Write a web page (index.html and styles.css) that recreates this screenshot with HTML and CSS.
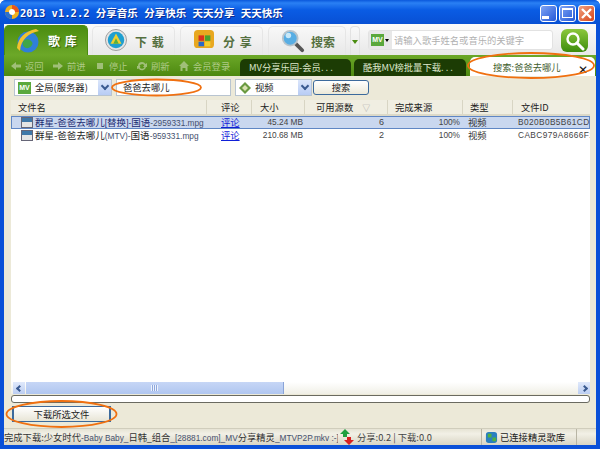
FILE: index.html
```html
<!DOCTYPE html>
<html lang="zh">
<head>
  <meta charset="UTF-8">
  <title>2013 v1.2.2</title>
  <link rel="stylesheet" href="styles.css">
</head>
<body>
  <div class="window">
    <div class="titlebar">
      <svg class="appIcon" width="16" height="16" viewBox="0 0 16 16">
        <circle cx="8" cy="8" r="7" fill="#f0b020"/>
        <circle cx="8" cy="8" r="3" fill="#fff"/>
        <path d="M8 1a7 7 0 0 1 7 7h-4a3 3 0 0 0-3-3z" fill="#e8541c"/>
        <path d="M1 8a7 7 0 0 0 7 7v-4a3 3 0 0 1-3-3z" fill="#2a6fd0"/>
      </svg>
      <span class="titleText">2013 v1.2.2 分享音乐 分享快乐 天天分享 天天快乐</span>
      <div class="winBtns">
        <span class="winBtn"><i class="minIcon"></i></span>
        <span class="winBtn"><i class="maxIcon"></i></span>
        <span class="winBtn closeBtn">
          <svg width="13" height="13" viewBox="0 0 13 13"><path d="M2 2l9 9M11 2l-9 9" stroke="#fff" stroke-width="2.4"/></svg>
        </span>
      </div>
    </div>

    <div class="client">
      <!-- Main tabs -->
      <div class="mainTabs">
        <div class="mainTab active">
          <svg width="24" height="26" viewBox="0 0 24 26">
            <ellipse cx="12" cy="14" rx="10.5" ry="10.5" fill="#2f7fd8"/>
            <path d="M7 13c4-3 7-2 9 1s-3 7-6 6-4-4-3-7z" fill="#3fa648"/>
            <path d="M1 20C2 10 9 3 20 1l3 2C13 5 5 11 4 23z" fill="#f2c230"/>
          </svg>
          <span class="tabLabel">歌 库</span>
        </div>
        <div class="mainTab t2">
          <svg width="22" height="22" viewBox="0 0 24 24">
            <circle cx="12" cy="12" r="11.5" fill="#e4e4e4" stroke="#999"/>
            <circle cx="12" cy="12" r="9" fill="#1f9fd0"/>
            <path d="M12 5l6 11H6z" fill="#f0d030"/>
            <path d="M12 10l3 6H9z" fill="#58b040"/>
          </svg>
          <span class="tabLabel">下 载</span>
        </div>
        <div class="mainTab t3">
          <svg width="22" height="20" viewBox="0 0 24 22">
            <rect x="1" y="1" width="22" height="20" rx="4" fill="#e8a820"/>
            <rect x="6" y="7" width="6" height="6" fill="#d83020"/>
            <rect x="13" y="7" width="6" height="6" fill="#48a030"/>
            <rect x="6" y="14" width="6" height="5" fill="#2868c8"/>
            <rect x="13" y="14" width="6" height="5" fill="#f0d030"/>
          </svg>
          <span class="tabLabel">分 享</span>
        </div>
        <div class="mainTab t4">
          <svg width="24" height="24" viewBox="0 0 26 26">
            <path d="M15 15l8 8" stroke="#555" stroke-width="4" stroke-linecap="round"/>
            <circle cx="10" cy="10" r="8" fill="#58aee4" stroke="#b8c4cc" stroke-width="2"/>
            <circle cx="8" cy="7" r="3" fill="#c8e8f8"/>
          </svg>
          <span class="tabLabel">搜索</span>
        </div>
        <div class="dropTab"><i class="greenCaret"></i></div>
        <div class="searchBox">
          <div class="mvPick"><span class="mvBadge small">MV</span><i class="blackCaret"></i></div>
          <div class="searchHint">请输入歌手姓名或音乐的关键字</div>
        </div>
        <div class="goBtn">
          <svg width="20" height="20" viewBox="0 0 20 20">
            <circle cx="8" cy="8" r="5.5" fill="none" stroke="#fff" stroke-width="2.4"/>
            <path d="M12 12l6 6" stroke="#fff" stroke-width="3" stroke-linecap="round"/>
          </svg>
        </div>
      </div>

      <!-- Green nav bar -->
      <div class="navBar">
        <div class="navLinks">
          <span class="navLink"><svg width="10" height="10" viewBox="0 0 10 10"><path d="M0 5l5-4v2.500h5v3H5V9z"/></svg>返回</span>
          <span class="navLink"><svg width="10" height="10" viewBox="0 0 10 10"><path d="M10 5L5 1v2.500H0v3h5V9z"/></svg>前进</span>
          <span class="navLink"><svg width="10" height="10" viewBox="0 0 10 10"><rect x="2" y="2" width="6" height="6"/></svg>停止</span>
          <span class="navLink"><svg width="10" height="10" viewBox="0 0 10 10"><path d="M5 1a4 4 0 0 1 3.500 2L10 2v4H6l1.200-1.400A2.500 2.500 0 0 0 2.500 5H1a4 4 0 0 1 4-4zM0 8V5h3.500L2.800 6.200A2.500 2.500 0 0 0 7.500 6H9a4 4 0 0 1-7.300 1.500z"/></svg>刷新</span>
          <span class="navLink wide"><svg width="10" height="10" viewBox="0 0 10 10"><path d="M5 0l5 5H8.500v5h-2V7h-3v3h-2V5H0z"/></svg>会员登录</span>
        </div>
        <div class="pageTab tabA">MV分享乐园-会员. . .</div>
        <div class="pageTab tabB">酷我MV榜批量下载. . .</div>
        <div class="pageTab current">搜索:爸爸去哪儿<b class="closeX">✕</b></div>
      </div>

      <!-- Search form -->
      <div class="formRow">
        <div class="field scope">
          <span class="mvBadge">MV</span>
          <span class="fieldText">全局(服务器)</span>
          <i class="comboBtn"><i class="chev"></i></i>
        </div>
        <div class="field keyword">爸爸去哪儿</div>
        <div class="field kind">
          <svg width="12" height="12" viewBox="0 0 12 12"><path d="M6 0l6 6-6 6-6-6z" fill="#6a9a40"/><path d="M6 3l3 3-3 3-3-3z" fill="#d8e0b0"/></svg>
          <span class="fieldText">视频</span>
          <i class="comboBtn"><i class="chev"></i></i>
        </div>
        <button class="searchBtn">搜索</button>
      </div>

      <!-- Results -->
      <div class="listBox">
        <div class="listRow listHead">
          <div class="cName">文件名</div>
          <div class="cNote">评论</div>
          <div class="cSize">大小</div>
          <div class="cSrc">可用源数<i class="sortMark">▽</i></div>
          <div class="cDone">完成来源</div>
          <div class="cType">类型</div>
          <div class="cId">文件ID</div>
        </div>
        <div class="listRow item selected">
          <div class="cName"><i class="fileIcon"></i><span class="nameText">群星-爸爸去哪儿<span class="lat">[</span>替换<span class="lat">]-</span>国语<span class="lat fade">-2959331.mpg</span></span></div>
          <div class="cNote"><a href="#">评论</a></div>
          <div class="cSize right">45.24 MB</div>
          <div class="cSrc right">6</div>
          <div class="cDone right">100%</div>
          <div class="cType">视频</div>
          <div class="cId">B020B0B5B61CDF6B</div>
        </div>
        <div class="listRow item">
          <div class="cName"><i class="fileIcon"></i><span class="nameText">群星-爸爸去哪儿<span class="lat fade">(MTV)-</span>国语<span class="lat fade">-959331.mpg</span></span></div>
          <div class="cNote"><a href="#">评论</a></div>
          <div class="cSize right">210.68 MB</div>
          <div class="cSrc right">2</div>
          <div class="cDone right">100%</div>
          <div class="cType">视频</div>
          <div class="cId">CABC979A8666F1C0</div>
        </div>
        <div class="listFill"></div>
        <div class="hScroll">
          <i class="scrollBtn"><i class="arrowL"></i></i>
          <div class="scrollThumb"><i class="grip"></i></div>
          <div class="scrollTrack"></div>
          <i class="scrollBtn"><i class="arrowR"></i></i>
        </div>
      </div>
      <div class="progress"></div>

      <div class="btnRow">
        <button class="downBtn">下载所选文件</button>
      </div>

      <!-- Status bar -->
      <div class="statusBar">
        <div class="stMsg">完成下载:少女时代<span class="lat fade">-Baby Baby_</span>日韩<span class="lat">_</span>组合<span class="lat fade">_[28881.com]_MV</span>分享精灵<span class="lat fade">_MTVP2P.mkv :-]</span></div>
        <div class="stRate">
          <svg width="14" height="16" viewBox="0 0 14 16">
            <path d="M5 0l5 5H7v3H3V5H0z" fill="#20a040"/>
            <path d="M9 16l5-5h-3V8H7v3H4z" fill="#d82020"/>
          </svg>
          <span>分享:0.2 | 下载:0.0</span>
        </div>
        <div class="stConn">
          <svg width="13" height="13" viewBox="0 0 14 14">
            <rect x="1" y="1" width="12" height="12" rx="3" fill="#2a7fc0"/>
            <path d="M3 3h4v4H3zM8 7h4v4H8z" fill="#50b040"/>
          </svg>
          <span>已连接精灵歌库</span>
        </div>
        <div class="stGrip"></div>
      </div>
    </div>
  </div>

  <!-- hand drawn marks on top of the screenshot -->
  <svg class="marks" width="600" height="449" viewBox="0 0 600 449">
    <g fill="none" stroke="#f07010" stroke-width="1.8">
      <ellipse cx="156.500" cy="87.500" rx="44.500" ry="8"/>
      <ellipse cx="531" cy="65.500" rx="63" ry="12.500"/>
      <ellipse cx="61.500" cy="414" rx="55" ry="13"/>
    </g>
  </svg>
</body>
</html>
```

FILE: styles.css
```css
* {
  box-sizing: border-box;
}
html, body {
  margin: 0;
  height: 449px;
  overflow: hidden;
}
body {
  position: relative;
  font-family: "Noto Sans CJK SC", "Liberation Sans", sans-serif;
  font-size: 9.3px;
  color: #222;
}
i {
  display: block;
  font-style: normal;
}
.lat {
  font-family: "Liberation Sans", sans-serif;
  font-size: 8.3px;
}
.fade {
  color: #45506e;
}

.window {
  width: 600px;
  height: 449px;
  display: flex;
  flex-direction: column;
  background: #0a50d8;
  border-radius: 6px 6px 0 0;
}

/* Title bar */
.titlebar {
  height: 24px;
  display: flex;
  align-items: center;
  padding: 0 5px 0 4px;
  flex: none;
  border-radius: 6px 6px 0 0;
  background: linear-gradient(#0a58dc, #2a80f4 3px, #0a5ce4 10px, #0850d4);
}
.titleText {
  color: #fff;
  font-family: "DejaVu Sans Mono", "Noto Sans CJK SC", monospace;
  font-size: 10.5px;
  font-weight: bold;
  white-space: nowrap;
  text-shadow: 1px 1px 0 #0a2c90;
}
.winBtns {
  margin-left: auto;
  display: flex;
  gap: 2px;
  margin-top: 2px;
}
.winBtn {
  width: 17px;
  height: 17px;
  border: 1px solid #fff;
  border-radius: 3px;
  background: linear-gradient(135deg, #7ea4f4, #2458d8);
  display: flex;
  align-items: center;
  justify-content: center;
}
.closeBtn {
  background: linear-gradient(135deg, #f0a080, #d84418);
}
.minIcon {
  width: 7px;
  height: 3px;
  background: #fff;
  margin: 8px 6px 0 0;
}
.maxIcon {
  width: 11px;
  height: 10px;
  border: 1px solid #fff;
  border-top-width: 2px;
}

.client {
  flex: 1;
  margin: 0 4px 4px;
  display: flex;
  flex-direction: column;
  background: #ece9d8;
  min-height: 0;
}

/* Main tabs */
.mainTabs {
  height: 31px;
  flex: none;
  display: flex;
  padding-top: 2px;
  background: linear-gradient(#fafafa, #e8e8e8);
}
.mainTab {
  width: 83px;
  margin-right: 5px;
  padding: 2px 0 0 12px;
  display: flex;
  gap: 8px;
  border: 1px solid #e6e6e6;
  border-bottom: none;
  border-radius: 5px 5px 0 0;
  background: linear-gradient(#f8f8f8, #e8e8e8);
}
.mainTab.active {
  width: 84px;
  margin: -1px 4px 0 0;
  padding-left: 11px;
  background: linear-gradient(#4a8c10, #6ca828);
  border-color: #4a8c10;
}
.mainTab.active .tabLabel {
  color: #fff;
  text-shadow: 1px 1px 1px #2c5c08;
}
.tabLabel {
  font-size: 12px;
  font-weight: bold;
  line-height: 26px;
  word-spacing: 2px;
  color: #55703f;
  white-space: nowrap;
}
.t4 {
  width: 78px;
  margin-right: 4px;
  gap: 6px;
}
.dropTab {
  width: 10px;
  margin-right: 8px;
  display: flex;
  align-items: center;
  justify-content: center;
  border: 1px solid #e2e2e2;
  border-bottom: none;
  border-radius: 4px 4px 0 0;
}
.greenCaret {
  border: 3px solid transparent;
  border-top: 4px solid #4a8c10;
  margin-top: 4px;
}
.searchBox {
  width: 185px;
  height: 20px;
  margin: 4px 8px 0 0;
  display: flex;
  background: #fff;
  border: 1px solid #e2e2e2;
  border-radius: 3px;
}
.mvPick {
  width: 23px;
  flex: none;
  display: flex;
  align-items: center;
  gap: 1px;
  padding-left: 2px;
  background: #e8e8e8;
}
.blackCaret {
  border: 2px solid transparent;
  border-top: 3px solid #000;
  margin-top: 2px;
}
.searchHint {
  color: #b0b0b0;
  padding-left: 2px;
  line-height: 18px;
  white-space: nowrap;
}
.goBtn {
  width: 27px;
  height: 23px;
  margin-top: 3px;
  border-radius: 6px;
  display: flex;
  align-items: center;
  justify-content: center;
  background: linear-gradient(#8cc83c, #3c8c0c);
}
.mvBadge {
  width: 13px;
  height: 12px;
  flex: none;
  line-height: 12px;
  text-align: center;
  font-size: 7px;
  font-weight: bold;
  color: #fff;
  background: #5aa83c;
  font-family: "Liberation Sans", sans-serif;
}

/* Nav bar */
.navBar {
  height: 21px;
  flex: none;
  display: flex;
  align-items: flex-end;
  background: linear-gradient(#6ca828, #4c8810);
  white-space: nowrap;
}
.navLinks {
  width: 236px;
  height: 21px;
  display: flex;
  align-items: center;
  gap: 10px;
  padding-left: 7px;
  color: #aeca86;
}
.navLink {
  display: flex;
  align-items: center;
  gap: 4px;
  width: 32px;
}
.navLink.wide {
  width: 52px;
}
.navLink svg {
  flex: none;
  fill: #a0bf78;
}
.pageTab {
  height: 17px;
  line-height: 17px;
  color: #dfe8cc;
  background: #1c3c04;
  border-radius: 5px 5px 0 0;
  padding-left: 9px;
  margin-right: 3px;
  overflow: hidden;
}
.tabA {
  width: 111px;
}
.tabB {
  width: 112px;
  margin-right: 4px;
}
.pageTab.current {
  position: relative;
  width: 125px;
  height: 19px;
  line-height: 20px;
  margin: 0;
  padding-left: 23px;
  color: #3d5c2b;
  background: #fff;
}
.closeX {
  position: absolute;
  right: 7px;
  top: 3px;
  color: #111;
  font-size: 12px;
  font-family: "DejaVu Sans", sans-serif;
}

/* Form */
.formRow {
  height: 24px;
  flex: none;
  display: flex;
  align-items: center;
  gap: 4px;
  padding: 0 0 1px 10px;
}
.field {
  height: 17px;
  display: flex;
  align-items: center;
  gap: 4px;
  background: #fff;
  border: 1px solid #b8c4d0;
  padding-left: 3px;
  white-space: nowrap;
  line-height: 15px;
}
.scope {
  width: 98px;
}
.keyword {
  width: 115px;
  padding-left: 6px;
}
.kind {
  width: 77px;
}
.fieldText {
  flex: 1;
}
.comboBtn {
  width: 13px;
  height: 15px;
  display: flex;
  align-items: center;
  justify-content: center;
  background: linear-gradient(#dbe6fb, #b8ccf4);
}
.chev {
  width: 6px;
  height: 6px;
  border-right: 2px solid #3a5a90;
  border-bottom: 2px solid #3a5a90;
  transform: rotate(45deg);
  margin-top: -3px;
}
.searchBtn {
  width: 56px;
  height: 15px;
  margin-left: -3px;
  padding: 0;
  font: 9.3px "Noto Sans CJK SC", sans-serif;
  line-height: 13px;
  color: #222;
  border: 1px solid #3c6a9c;
  border-radius: 3px;
  background: linear-gradient(#fff, #ece9d8);
}

/* Result list */
.listBox {
  flex: 1;
  min-height: 0;
  margin: 0 6px 0 7px;
  display: flex;
  flex-direction: column;
  background: #fff;
}
.listRow {
  display: flex;
  white-space: nowrap;
}
.listHead {
  height: 16px;
  flex: none;
  line-height: 15px;
  background: #f0eee2;
  border-bottom: 2px solid #dcd9c8;
}
.listHead > div {
  border-right: 1px solid #d8d5c4;
}
.listHead .cName { padding-left: 7px; }
.listHead .cNote { padding-left: 14px; }
.listHead .cSize { padding-left: 8px; }
.listHead .cSrc { padding-left: 11px; }
.listHead .cDone { padding-left: 7px; }
.listHead .cType { padding-left: 7px; }
.listHead .cId { padding-left: 8px; border-right: none; }
.cName { width: 196px; overflow: hidden; }
.cNote { width: 45px; }
.cSize { width: 53px; }
.cSrc { width: 83px; }
.cDone { width: 75px; }
.cType { width: 50px; }
.cId { flex: 1; overflow: hidden; }
.sortMark {
  display: inline;
  margin-left: 9px;
  color: #aaa;
  font-size: 8px;
}
.item {
  height: 13px;
  line-height: 13px;
  color: #333;
}
.item.selected {
  background: #c9d7ef;
  outline: 1px solid #5f86c4;
  outline-offset: -1px;
}
.item > div {
  overflow: hidden;
}
.item .cName {
  display: flex;
  align-items: center;
  gap: 2px;
  padding-left: 10px;
}
.nameText {
  font-size: 9.5px;
  color: #222;
}
.selected .nameText {
  color: #1a2a70;
}
.fileIcon {
  width: 12px;
  height: 11px;
  flex: none;
  background: linear-gradient(#3f78a8 45%, #e4e4e4 45%);
  border: 1px solid #667;
}
.item .cNote {
  padding-left: 14px;
}
.cNote a {
  color: #1020d8;
}
.right {
  font: 8.3px/13px "Liberation Sans", sans-serif;
  color: #444;
  text-align: right;
  padding-right: 2px;
}
.item .cSrc {
  font-size: 9px;
  padding-right: 4px;
}
.item .cDone {
  padding-right: 3px;
}
.item .cType {
  padding-left: 5px;
}
.item .cId {
  padding-left: 5px;
  font: 8.3px/13px "Liberation Sans", sans-serif;
  letter-spacing: 0.4px;
  color: #444;
}
.listFill {
  flex: 1;
}
.hScroll {
  height: 12px;
  flex: none;
  display: flex;
  align-items: stretch;
  background: linear-gradient(#fff, #f0efe6);
}
.scrollBtn {
  width: 12px;
  margin-left: 2px;
  display: flex;
  align-items: center;
  justify-content: center;
  background: linear-gradient(#e0e9fb, #bccef2);
}
.arrowL, .arrowR {
  width: 5px;
  height: 5px;
  border-left: 2px solid #3a5a90;
  border-bottom: 2px solid #3a5a90;
}
.arrowL { transform: rotate(45deg); }
.arrowR { transform: rotate(225deg); }
.scrollThumb {
  width: 258px;
  margin-left: 1px;
  display: flex;
  align-items: center;
  justify-content: center;
  background: linear-gradient(#c6d6f6, #b0c6f0);
  border-right: 1px solid #8aa4d8;
}
.grip {
  width: 7px;
  height: 6px;
  background: repeating-linear-gradient(90deg, #eef3fc 0 1px, #8fa8dc 1px 2px);
}
.scrollTrack {
  flex: 1;
}
.progress {
  height: 8px;
  flex: none;
  margin: 1px 6px 0 7px;
  background: #fff;
  border: 1px solid #6a6a60;
  border-radius: 3px;
}
.btnRow {
  height: 25px;
  flex: none;
  padding: 3px 0 0 8px;
}
.downBtn {
  width: 99px;
  height: 16px;
  padding: 0;
  font: 9.3px "Noto Sans CJK SC", sans-serif;
  line-height: 14px;
  color: #222;
  border: 1px solid #3c6a9c;
  border-left-width: 2px;
  border-right-width: 2px;
  background: linear-gradient(#fff, #e8e5d6);
}

/* Status bar */
.statusBar {
  height: 17px;
  flex: none;
  display: flex;
  align-items: center;
  background: linear-gradient(#e6e3d4, #f2f0e6 30%, #d8d5c4);
  border-top: 1px solid #d0cdbc;
  white-space: nowrap;
}
.stMsg {
  width: 334px;
  overflow: hidden;
  color: #333;
}
.stRate {
  width: 143px;
  display: flex;
  align-items: center;
  gap: 3px;
  padding-left: 2px;
  color: #444;
}
.stConn {
  width: 96px;
  height: 100%;
  display: flex;
  align-items: center;
  gap: 2px;
  padding-left: 3px;
  border-left: 1px solid #b8b5a4;
  border-right: 1px solid #b8b5a4;
}
.stGrip {
  flex: 1;
}

.marks {
  position: absolute;
  left: 0;
  top: 0;
  pointer-events: none;
}
```
